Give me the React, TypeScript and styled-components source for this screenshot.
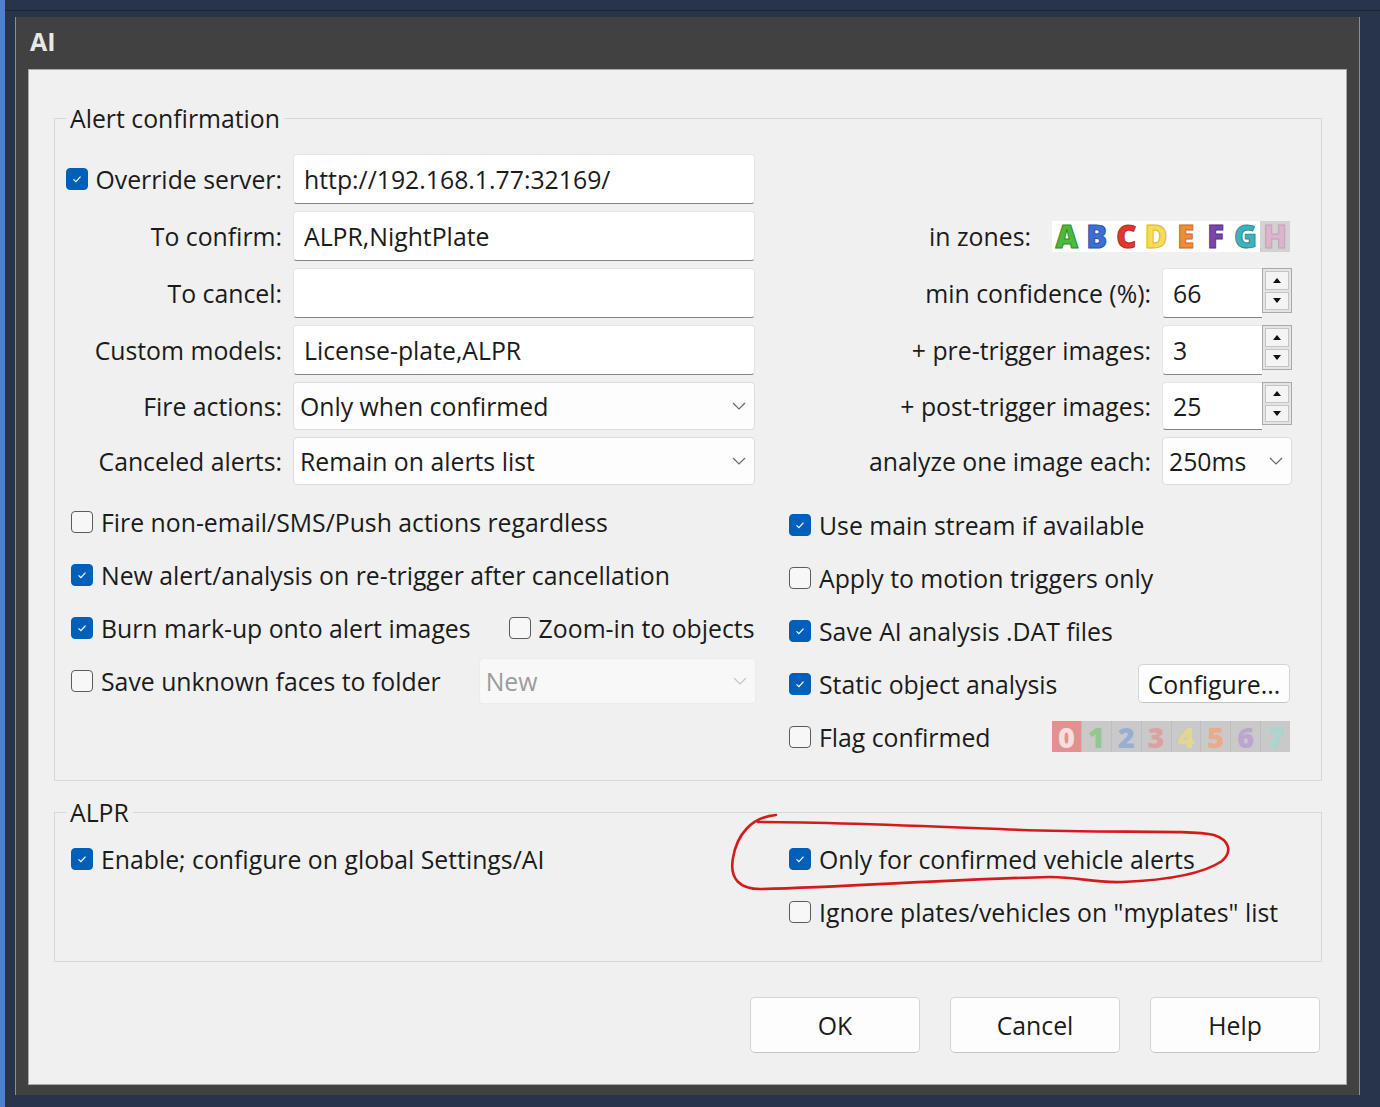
import React from "react";
import styled, { createGlobalStyle } from "styled-components";

const Global = createGlobalStyle`
  html, body { margin: 0; padding: 0; background: #273449; }
  body { font-family: "Open Sans", "Noto Sans", sans-serif; color: #1b1b1b; }
  * { box-sizing: border-box; }
`;

const FONT = 24.8;

const Screen = styled.div`
  position: relative;
  width: 1380px;
  height: 1107px;
  background: #273449;
  border-left: 5px solid #4d80cf;
  padding: 10px 20px 12px 10px;
  display: flex;
  flex-direction: column;
  overflow: hidden;
`;

const TopRule = styled.div`
  height: 1px;
  background: #1c2534;
  margin: 0 -20px 6px -10px;
`;

const Window = styled.div`
  flex: 1;
  display: flex;
  flex-direction: column;
  background: #414141;
  border-left: 1px solid #8e8e8e;
  border-right: 1px solid #8e8e8e;
`;

const TitleBar = styled.div`
  height: 52px;
  display: flex;
  align-items: center;
  padding: 0 0 4px 14px;
  color: #e8e8e8;
  font-weight: 700;
  font-size: 25px;
`;

const Content = styled.div`
  flex: 1;
  margin: 0 12px 10px 12px;
  background: #f0f0f0;
  border: 1px solid #a8a8a8;
  padding: 0 24px 0 25px;
  display: flex;
  flex-direction: column;
  font-size: ${FONT}px;
`;

const Group = styled.fieldset<{ $top: number; $pad: string }>`
  margin: ${(p) => p.$top}px 0 0;
  padding: ${(p) => p.$pad};
  border: 1px solid #d8d8d8;
  min-width: 0;
`;

const Legend = styled.legend`
  padding: 0 4px;
  margin-left: -5px;
  line-height: 32px;
  font-size: ${FONT}px;
`;

const FormGrid = styled.div`
  display: grid;
  grid-template-columns: 211px 462px 1fr 130px;
  grid-template-rows: 50px 50px 50px 50px 48px 48px;
  column-gap: 11px;
  row-gap: 7px;
`;

const FieldLabel = styled.div<{ $spread?: boolean }>`
  display: flex;
  align-items: center;
  justify-content: flex-end;
  white-space: nowrap;
  & > label { flex: ${(p) => (p.$spread ? "1" : "none")}; }
`;

const ZonesCell = styled.div`
  grid-column: 3 / 5;
  display: flex;
  align-items: center;
  justify-content: flex-end;
  gap: 21px;
  padding-right: 2px;
`;

const TextBox = styled.input`
  width: 100%;
  height: 100%;
  background: #ffffff;
  border: 1px solid #e4e4e4;
  border-bottom: 1px solid #858585;
  border-radius: 4px;
  padding: 0 10px;
  font: inherit;
  color: #1b1b1b;
  outline: none;
`;

const Combo = styled.div<{ $disabled?: boolean }>`
  height: 100%;
  display: flex;
  align-items: center;
  justify-content: space-between;
  background: ${(p) => (p.$disabled ? "#f8f8f8" : "#fdfdfd")};
  border: 1px solid ${(p) => (p.$disabled ? "#ebebeb" : "#dcdcdc")};
  border-radius: 4px;
  padding: 0 8px 0 6px;
  color: ${(p) => (p.$disabled ? "#9c9c9c" : "#1b1b1b")};
  white-space: nowrap;
`;

const SpinWrap = styled.div`
  height: 100%;
  display: flex;
`;

const SpinInput = styled.div`
  flex: 1;
  background: #ffffff;
  border: 1px solid #e4e4e4;
  border-bottom: 1px solid #858585;
  border-right: none;
  border-radius: 4px 0 0 4px;
  display: flex;
  align-items: center;
  padding-left: 10px;
`;

const SpinButtons = styled.div`
  width: 30px;
  align-self: stretch;
  margin-bottom: 5px;
  border: 1px solid #a9a9a9;
  background: #e4e4e4;
  padding: 2px;
  display: flex;
  flex-direction: column;
  gap: 2px;
`;

const SpinBtn = styled.div<{ $down?: boolean }>`
  flex: 1;
  background: #f4f4f4;
  border: 1px solid #c4c4c4;
  display: flex;
  align-items: center;
  justify-content: center;
  &::after {
    content: "";
    border-left: 4px solid transparent;
    border-right: 4px solid transparent;
    ${(p) => (p.$down ? "border-top: 5px solid #111;" : "border-bottom: 5px solid #111;")}
  }
`;

const ZoneStrip = styled.div`
  width: 238px;
  height: 31px;
  display: flex;
  background: #ffffff;
`;

const ZoneLetter = styled.span<{ $c: string; $s: string; $bg?: string }>`
  flex: 1;
  text-align: center;
  font-weight: 800;
  font-size: 31px;
  line-height: 31px;
  color: ${(p) => p.$c};
  -webkit-text-stroke: 1px ${(p) => p.$s};
  background: ${(p) => p.$bg || "transparent"};
`;

const DigitStrip = styled.div`
  width: 238px;
  height: 31px;
  display: flex;
  background: #c9c9c9;
  margin-right: 2px;
`;

const Digit = styled.span<{ $c: string; $bg?: string }>`
  flex: 1;
  text-align: center;
  font-weight: 800;
  font-size: 29px;
  line-height: 31px;
  color: ${(p) => p.$c};
  background: ${(p) => p.$bg || "transparent"};
  border-right: 1px solid #bdbdbd;
  &:last-child { border-right: none; }
`;

const CheckGrid = styled.div<{ $top: number }>`
  display: grid;
  grid-template-columns: 718px 1fr;
  margin-top: ${(p) => p.$top}px;
`;

const CheckCol = styled.div<{ $offset?: number }>`
  display: flex;
  flex-direction: column;
  padding-top: ${(p) => p.$offset || 0}px;
`;

const CheckRow = styled.div<{ $spread?: boolean }>`
  height: 53px;
  display: flex;
  align-items: center;
  gap: 38px;
  justify-content: ${(p) => (p.$spread ? "space-between" : "flex-start")};
`;

const CheckLabel = styled.label`
  display: inline-flex;
  align-items: center;
  gap: 8px;
  white-space: nowrap;
`;

const CheckText = styled.span`
  margin-left: auto;
`;

const Box = styled.span<{ $checked: boolean }>`
  width: 22px;
  height: 22px;
  flex: none;
  border-radius: 4px;
  display: inline-flex;
  align-items: center;
  justify-content: center;
  background: ${(p) => (p.$checked ? "#005fb8" : "#f7f7f7")};
  border: ${(p) => (p.$checked ? "1px solid #005fb8" : "1.5px solid #5c5c5c")};
`;

const SmallButton = styled.button`
  width: 152px;
  height: 39px;
  margin-right: 2px;
  background: #fdfdfd;
  border: 1px solid #d4d4d4;
  border-bottom-color: #c6c6c6;
  border-radius: 5px;
  font: inherit;
  color: #1b1b1b;
  padding: 0;
`;

const ButtonBar = styled.div`
  display: flex;
  justify-content: flex-end;
  gap: 30px;
  margin-top: 35px;
  padding-right: 2px;
`;

const DialogButton = styled.button`
  width: 170px;
  height: 56px;
  background: #fdfdfd;
  border: 1px solid #d4d4d4;
  border-bottom-color: #c4c4c4;
  border-radius: 5px;
  font: inherit;
  color: #1b1b1b;
`;

const Annotation = styled.svg`
  position: absolute;
  left: -5px;
  top: 0;
  width: 1380px;
  height: 1107px;
  pointer-events: none;
`;

const Chevron = ({ light }: { light?: boolean }) => (
  <svg width="14" height="8" viewBox="0 0 14 8">
    <path d="M1 1 L7 7 L13 1" fill="none" stroke={light ? "#c4c4c4" : "#6a6a6a"} strokeWidth="1.2" />
  </svg>
);

const Check = ({ checked, children }: { checked: boolean; children?: React.ReactNode }) => (
  <CheckLabel>
    <Box $checked={checked}>
      {checked && (
        <svg width="14" height="14" viewBox="0 0 14 14">
          <path d="M3.5 7.4 L5.9 9.7 L10.5 4.6" fill="none" stroke="#fff" strokeWidth="1.2" />
        </svg>
      )}
    </Box>
    <CheckText>{children}</CheckText>
  </CheckLabel>
);

const Spinner = ({ value }: { value: string }) => (
  <SpinWrap>
    <SpinInput>{value}</SpinInput>
    <SpinButtons>
      <SpinBtn />
      <SpinBtn $down />
    </SpinButtons>
  </SpinWrap>
);

const zones = [
  { l: "A", c: "#4cba3e", s: "#2f8e28" },
  { l: "B", c: "#3b6fd1", s: "#2a55a8" },
  { l: "C", c: "#e3372e", s: "#b82822" },
  { l: "D", c: "#f7dc5a", s: "#d9b62a" },
  { l: "E", c: "#f08a3c", s: "#cf6a24" },
  { l: "F", c: "#7a46a8", s: "#5e3088" },
  { l: "G", c: "#3fb2ba", s: "#2a8e96" },
  { l: "H", c: "#dcb4cc", s: "#caa0ba", bg: "#d2d2d2" },
];

const digits = [
  { d: "0", c: "#f4dede", bg: "#e29090" },
  { d: "1", c: "#94c690" },
  { d: "2", c: "#98aed2" },
  { d: "3", c: "#dca2a2" },
  { d: "4", c: "#e2d690" },
  { d: "5", c: "#eaaa8c" },
  { d: "6", c: "#bca6cc" },
  { d: "7", c: "#a6d6d0" },
];

export default function App() {
  return (
    <>
      <Global />
      <Screen>
        <TopRule />
        <Window>
          <TitleBar>AI</TitleBar>
          <Content>
            <Group $top={32} $pad="20px 29px 17px 16px">
              <Legend>Alert confirmation</Legend>
              <FormGrid>
                <FieldLabel $spread>
                  <Check checked>Override server:</Check>
                </FieldLabel>
                <TextBox readOnly value="http://192.168.1.77:32169/" />
                <div />
                <div />

                <FieldLabel>To confirm:</FieldLabel>
                <TextBox readOnly value="ALPR,NightPlate" />
                <ZonesCell>
                  <span>in zones:</span>
                  <ZoneStrip>
                    {zones.map((z) => (
                      <ZoneLetter key={z.l} $c={z.c} $s={z.s} $bg={z.bg}>
                        {z.l}
                      </ZoneLetter>
                    ))}
                  </ZoneStrip>
                </ZonesCell>

                <FieldLabel>To cancel:</FieldLabel>
                <TextBox readOnly value="" />
                <FieldLabel>min confidence (%):</FieldLabel>
                <Spinner value="66" />

                <FieldLabel>Custom models:</FieldLabel>
                <TextBox readOnly value="License-plate,ALPR" />
                <FieldLabel>+ pre-trigger images:</FieldLabel>
                <Spinner value="3" />

                <FieldLabel>Fire actions:</FieldLabel>
                <Combo>
                  Only when confirmed
                  <Chevron />
                </Combo>
                <FieldLabel>+ post-trigger images:</FieldLabel>
                <Spinner value="25" />

                <FieldLabel>Canceled alerts:</FieldLabel>
                <Combo>
                  Remain on alerts list
                  <Chevron />
                </Combo>
                <FieldLabel>analyze one image each:</FieldLabel>
                <Combo>
                  250ms
                  <Chevron />
                </Combo>
              </FormGrid>

              <CheckGrid $top={10}>
                <CheckCol>
                  <CheckRow>
                    <Check checked={false}>Fire non-email/SMS/Push actions regardless</Check>
                  </CheckRow>
                  <CheckRow>
                    <Check checked>New alert/analysis on re-trigger after cancellation</Check>
                  </CheckRow>
                  <CheckRow>
                    <Check checked>Burn mark-up onto alert images</Check>
                    <Check checked={false}>Zoom-in to objects</Check>
                  </CheckRow>
                  <CheckRow>
                    <Check checked={false}>Save unknown faces to folder</Check>
                    <Combo $disabled style={{ width: 277, height: 46 }}>
                      New
                      <Chevron light />
                    </Combo>
                  </CheckRow>
                </CheckCol>
                <CheckCol $offset={3}>
                  <CheckRow>
                    <Check checked>Use main stream if available</Check>
                  </CheckRow>
                  <CheckRow>
                    <Check checked={false}>Apply to motion triggers only</Check>
                  </CheckRow>
                  <CheckRow>
                    <Check checked>Save AI analysis .DAT files</Check>
                  </CheckRow>
                  <CheckRow $spread>
                    <Check checked>Static object analysis</Check>
                    <SmallButton>Configure...</SmallButton>
                  </CheckRow>
                  <CheckRow $spread>
                    <Check checked={false}>Flag confirmed</Check>
                    <DigitStrip>
                      {digits.map((d) => (
                        <Digit key={d.d} $c={d.c} $bg={d.bg}>
                          {d.d}
                        </Digit>
                      ))}
                    </DigitStrip>
                  </CheckRow>
                </CheckCol>
              </CheckGrid>
            </Group>

            <Group $top={15} $pad="4px 29px 23px 16px">
              <Legend>ALPR</Legend>
              <CheckGrid $top={0}>
                <CheckCol>
                  <CheckRow>
                    <Check checked>Enable; configure on global Settings/AI</Check>
                  </CheckRow>
                </CheckCol>
                <CheckCol>
                  <CheckRow>
                    <Check checked>Only for confirmed vehicle alerts</Check>
                  </CheckRow>
                  <CheckRow>
                    <Check checked={false}>Ignore plates/vehicles on "myplates" list</Check>
                  </CheckRow>
                </CheckCol>
              </CheckGrid>
            </Group>

            <ButtonBar>
              <DialogButton>OK</DialogButton>
              <DialogButton>Cancel</DialogButton>
              <DialogButton>Help</DialogButton>
            </ButtonBar>
          </Content>
        </Window>
        <Annotation viewBox="0 0 1380 1107">
          <path
            d="M776 815 C752 817 737 834 733 858 C729 880 741 889 760 889 C850 887 950 879 1050 877 C1080 877 1092 883 1122 882 C1172 880 1206 872 1222 861 C1233 851 1229 840 1214 835 C1188 829 1100 834 1000 829 C900 825 820 822 758 822"
            fill="none"
            stroke="#d41b1b"
            strokeWidth="2.6"
            strokeLinecap="round"
          />
        </Annotation>
      </Screen>
    </>
  );
}
